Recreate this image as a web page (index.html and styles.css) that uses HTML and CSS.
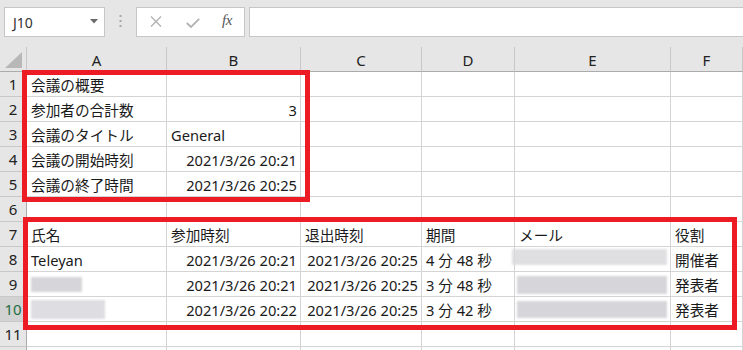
FILE: index.html
```html
<!DOCTYPE html>
<html lang="ja">
<head>
<meta charset="utf-8">
<title>Sheet</title>
<link rel="stylesheet" href="styles.css">
</head>
<body>
<div class="app">
  <div class="toolbar">
    <div class="namebox">
      <span class="nb-text">J10</span>
      <svg class="nb-arrow" width="8" height="5" viewBox="0 0 8 5"><path d="M0 0H8L4 4.5Z" fill="#6b6b6b"/></svg>
    </div>
    <div class="dots">
      <svg width="3" height="12" viewBox="0 0 3 12"><rect x="0.5" y="0" width="2" height="2" fill="#a6a6a6"/><rect x="0.5" y="5" width="2" height="2" fill="#a6a6a6"/><rect x="0.5" y="10" width="2" height="2" fill="#a6a6a6"/></svg>
    </div>
    <div class="fxbtns">
      <svg class="ico-x" width="12" height="11" viewBox="0 0 12 11"><path d="M1 0.5L11 10.5M11 0.5L1 10.5" stroke="#b3b3b3" stroke-width="1.4" fill="none"/></svg>
      <svg class="ico-ok" width="14" height="10" viewBox="0 0 14 10"><path d="M0.8 5L5 9L13.2 0.8" stroke="#b3b3b3" stroke-width="1.8" fill="none"/></svg>
      <span class="fx">fx</span>
    </div>
    <div class="formula"></div>
  </div>

  <div class="sheet">
    <div class="grid">
      <div class="corner"><svg width="18" height="16" viewBox="0 0 18 16"><path d="M17 0V16H0Z" fill="#b8b8b8"/></svg></div>
      <div class="colh">A</div><div class="colh">B</div><div class="colh">C</div><div class="colh">D</div><div class="colh">E</div><div class="colh">F</div>

      <div class="rowh">1</div><div class="c">会議の概要</div><div class="c"></div><div class="c"></div><div class="c"></div><div class="c"></div><div class="c"></div>
      <div class="rowh">2</div><div class="c">参加者の合計数</div><div class="c r">3</div><div class="c"></div><div class="c"></div><div class="c"></div><div class="c"></div>
      <div class="rowh">3</div><div class="c">会議のタイトル</div><div class="c">General</div><div class="c"></div><div class="c"></div><div class="c"></div><div class="c"></div>
      <div class="rowh">4</div><div class="c">会議の開始時刻</div><div class="c r">2021/3/26 20:21</div><div class="c"></div><div class="c"></div><div class="c"></div><div class="c"></div>
      <div class="rowh">5</div><div class="c">会議の終了時間</div><div class="c r">2021/3/26 20:25</div><div class="c"></div><div class="c"></div><div class="c"></div><div class="c"></div>
      <div class="rowh">6</div><div class="c"></div><div class="c"></div><div class="c"></div><div class="c"></div><div class="c"></div><div class="c"></div>
      <div class="rowh">7</div><div class="c">氏名</div><div class="c">参加時刻</div><div class="c">退出時刻</div><div class="c">期間</div><div class="c">メール</div><div class="c">役割</div>
      <div class="rowh">8</div><div class="c">Teleyan</div><div class="c r">2021/3/26 20:21</div><div class="c r">2021/3/26 20:25</div><div class="c">4 分 48 秒</div><div class="c"><span class="blur mail1"></span></div><div class="c">開催者</div>
      <div class="rowh">9</div><div class="c"><span class="blur name1"></span></div><div class="c r">2021/3/26 20:21</div><div class="c r">2021/3/26 20:25</div><div class="c">3 分 48 秒</div><div class="c"><span class="blur mail2"></span></div><div class="c">発表者</div>
      <div class="rowh sel">10</div><div class="c"><span class="blur name2"></span></div><div class="c r">2021/3/26 20:22</div><div class="c r">2021/3/26 20:25</div><div class="c">3 分 42 秒</div><div class="c"><span class="blur mail3"></span></div><div class="c">発表者</div>
      <div class="rowh">11</div><div class="c"></div><div class="c"></div><div class="c"></div><div class="c"></div><div class="c"></div><div class="c"></div>
      <div class="rowh"></div><div class="c"></div><div class="c"></div><div class="c"></div><div class="c"></div><div class="c"></div><div class="c"></div>
    </div>
    <div class="mark mark1"></div>
    <div class="mark mark2"></div>
  </div>
</div>
</body>
</html>
```

FILE: styles.css
```css
* { box-sizing: border-box; }
html, body { margin: 0; padding: 0; }
body {
  width: 743px;
  height: 350px;
  overflow: hidden;
  background: #e6e6e6;
  font-family: "Noto Sans", "Noto Sans CJK JP", sans-serif;
  color: #222;
}
.app { position: relative; width: 743px; height: 350px; overflow: hidden; }

.toolbar {
  display: flex;
  align-items: flex-start;
  height: 47px;
  padding: 7px 0 0 4px;
  background: #e6e6e6;
}
.namebox {
  width: 101px;
  height: 30px;
  background: #fff;
  border: 1px solid #c6c6c6;
  display: flex;
  align-items: center;
  justify-content: space-between;
  padding: 0 6px 0 8px;
}
.nb-text { font-size: 14px; color: #333; }
.nb-arrow { margin-top: -1px; }
.dots {
  width: 31px;
  height: 30px;
  display: flex;
  align-items: center;
  justify-content: center;
  padding-bottom: 2px;
}
.fxbtns {
  width: 109px;
  height: 30px;
  background: #fff;
  border: 1px solid #c6c6c6;
  display: flex;
  align-items: center;
  padding-left: 13px;
}
.ico-x { margin-top: -2px; }
.ico-ok { margin-left: 24px; margin-top: 1px; }
.fx {
  margin-left: 22px;
  font-family: "Liberation Serif", serif;
  font-style: italic;
  font-size: 15px;
  color: #555;
  margin-top: -3px;
  letter-spacing: -0.5px;
}
.formula {
  flex: 1;
  height: 30px;
  margin-left: 4px;
  margin-right: -4px;
  background: #fff;
  border: 1px solid #c6c6c6;
}

.sheet { position: relative; }
.grid {
  display: grid;
  grid-template-columns: 27px 140px 134px 121px 93px 156px 1fr;
  grid-auto-rows: 25px;
  background: #fff;
}
.corner {
  background: #e6e6e6;
  border-right: 1px solid #c8c8c8;
  border-bottom: 1px solid #ababab;
  display: flex;
  align-items: flex-end;
  justify-content: flex-end;
  padding: 0 3px 3px 0;
}
.colh {
  background: #e6e6e6;
  border-right: 1px solid #c8c8c8;
  border-bottom: 1px solid #ababab;
  display: flex;
  align-items: center;
  justify-content: center;
  font-size: 15px;
  color: #222;
  padding-top: 1px;
}
.rowh {
  background: #e6e6e6;
  border-right: 1px solid #ababab;
  border-bottom: 1px solid #c8c8c8;
  display: flex;
  align-items: center;
  justify-content: center;
  font-size: 15px;
  color: #222;
}
.rowh.sel {
  background: #d2d2d2;
  color: #1f6e43;
  box-shadow: inset -2px 0 0 #217346;
}
.c {
  border-right: 1px solid #d4d4d4;
  border-bottom: 1px solid #d4d4d4;
  display: flex;
  align-items: center;
  padding: 1px 3px 0 4px;
  font-size: 14.67px;
  white-space: nowrap;
  overflow: visible;
  color: #1a1a1a;
}
.c.r { justify-content: flex-end; }

.blur {
  display: block;
  background: #cfcfd4;
  filter: blur(1.2px);
  opacity: 0.85;
}
.name1 { width: 51px; height: 15px; }
.name2 { width: 74px; height: 19px; background: #d8d8dd; }
.mail1 { width: 157px; height: 16px; margin-left: -7px; margin-top: -6px; background: #dadade; }
.mail2 { width: 150px; height: 18px; margin-left: -2px; }
.mail3 { width: 153px; height: 17px; margin-left: -2px; }

.mark {
  position: absolute;
  border: 5px solid #ed1c24;
  pointer-events: none;
}
.mark1 { left: 22px; top: 23px; width: 288px; height: 132px; }
.mark2 { left: 23px; top: 170px; width: 714px; height: 113px; }
```
